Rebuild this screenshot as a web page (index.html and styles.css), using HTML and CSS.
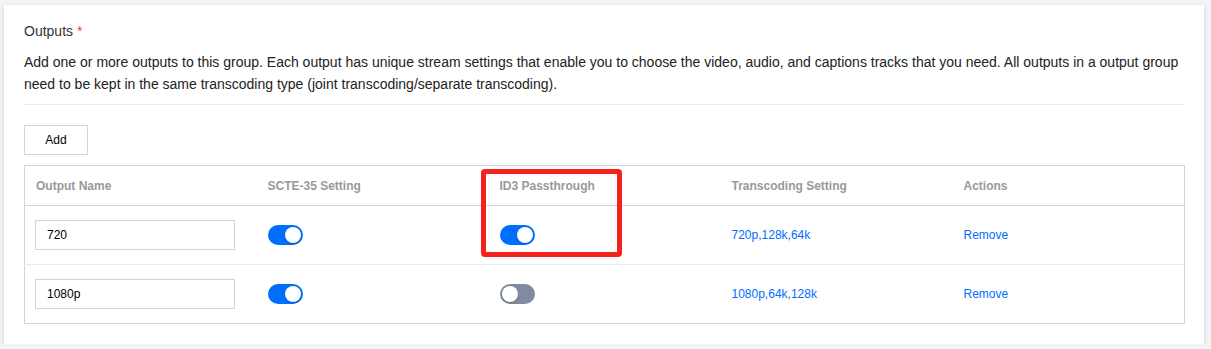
FILE: index.html
```html
<!DOCTYPE html>
<html lang="en">
<head>
    <meta charset="UTF-8">
    <meta name="viewport" content="width=device-width, initial-scale=1.0">
    <title>Outputs</title>
    <link rel="stylesheet" href="styles.css">
</head>
<body>
    <div class="card">
        <div class="field-title">Outputs <span class="required">*</span></div>
        <p class="field-desc">Add one or more outputs to this group. Each output has unique stream settings that enable you to choose the video, audio, and captions tracks that you need. All outputs in a output group need to be kept in the same transcoding type (joint transcoding/separate transcoding).</p>
        <div class="divider"></div>
        <button class="btn">Add</button>
        <div class="table-wrap">
            <table class="outputs">
                <thead>
                    <tr>
                        <th>Output Name</th>
                        <th>SCTE-35 Setting</th>
                        <th>ID3 Passthrough</th>
                        <th>Transcoding Setting</th>
                        <th>Actions</th>
                    </tr>
                </thead>
                <tbody>
                    <tr>
                        <td><input class="name-input" type="text" value="720"></td>
                        <td><span class="switch on"></span></td>
                        <td><span class="switch on"></span></td>
                        <td><a class="link" href="#">720p,128k,64k</a></td>
                        <td><a class="link" href="#">Remove</a></td>
                    </tr>
                    <tr>
                        <td><input class="name-input" type="text" value="1080p"></td>
                        <td><span class="switch on"></span></td>
                        <td><span class="switch"></span></td>
                        <td><a class="link" href="#">1080p,64k,128k</a></td>
                        <td><a class="link" href="#">Remove</a></td>
                    </tr>
                </tbody>
            </table>
            <div class="highlight"></div>
        </div>
    </div>
</body>
</html>
```

FILE: styles.css
```css
body {
    margin: 0;
    padding: 5px 7px 0 4px;
    background-color: #f3f4f7;
    font-family: "Liberation Sans", Arial, sans-serif;
    color: #222;
}
.card {
    width: 1200px;
    box-sizing: border-box;
    background: white;
    padding: 15px 19px 20px 20px;
    box-shadow: 0 2px 4px rgba(54,58,80,0.22);
}
.field-title {
    font-size: 14px;
    line-height: 22px;
    color: #333;
}
.required {
    color: #e54545;
}
.field-desc {
    margin: 9px 0 0 0;
    font-size: 14px;
    line-height: 22px;
}
.divider {
    margin-top: 9px;
    height: 1px;
    background: #e7eaef;
}
.btn {
    margin-top: 20px;
    width: 64px;
    height: 30px;
    border: 1px solid #cfd5de;
    background: white;
    font-family: inherit;
    font-size: 12px;
    color: #000;
    padding: 0;
    display: block;
}
.table-wrap {
    position: relative;
    margin-top: 10px;
}
.outputs {
    width: 100%;
    table-layout: fixed;
    border-collapse: collapse;
    border: 1px solid #cfd5de;
    font-size: 12px;
}
.outputs th {
    height: 39px;
    padding: 0 11px;
    text-align: left;
    color: #999;
    font-weight: bold;
    border-bottom: 1px solid #cfd5de;
}
.outputs td {
    height: 58px;
    padding: 0 11px;
    vertical-align: middle;
    border-bottom: 1px solid #e7eaef;
}
.outputs tr:last-child td {
    border-bottom: none;
}
.name-input {
    width: 200px;
    height: 30px;
    box-sizing: border-box;
    border: 1px solid #cfd5de;
    padding: 0 11px;
    font-family: inherit;
    font-size: 12px;
    color: #000;
    outline: none;
    display: block;
    margin-left: -1px;
}
.switch {
    display: block;
    position: relative;
    width: 35px;
    height: 20px;
    border-radius: 10px;
    background: #808ba0;
}
.switch::after {
    content: "";
    position: absolute;
    top: 2px;
    left: 2px;
    width: 16px;
    height: 16px;
    border-radius: 50%;
    background: white;
    box-shadow: 0 1px 2px rgba(0,0,0,0.2);
}
.switch.on {
    background: #006eff;
}
.switch.on::after {
    left: 17px;
}
.link {
    color: #006eff;
    text-decoration: none;
}
.highlight {
    position: absolute;
    left: 457px;
    top: 4px;
    width: 141px;
    height: 88px;
    box-sizing: border-box;
    border: 5px solid #f5221b;
    border-radius: 4px;
}
```
